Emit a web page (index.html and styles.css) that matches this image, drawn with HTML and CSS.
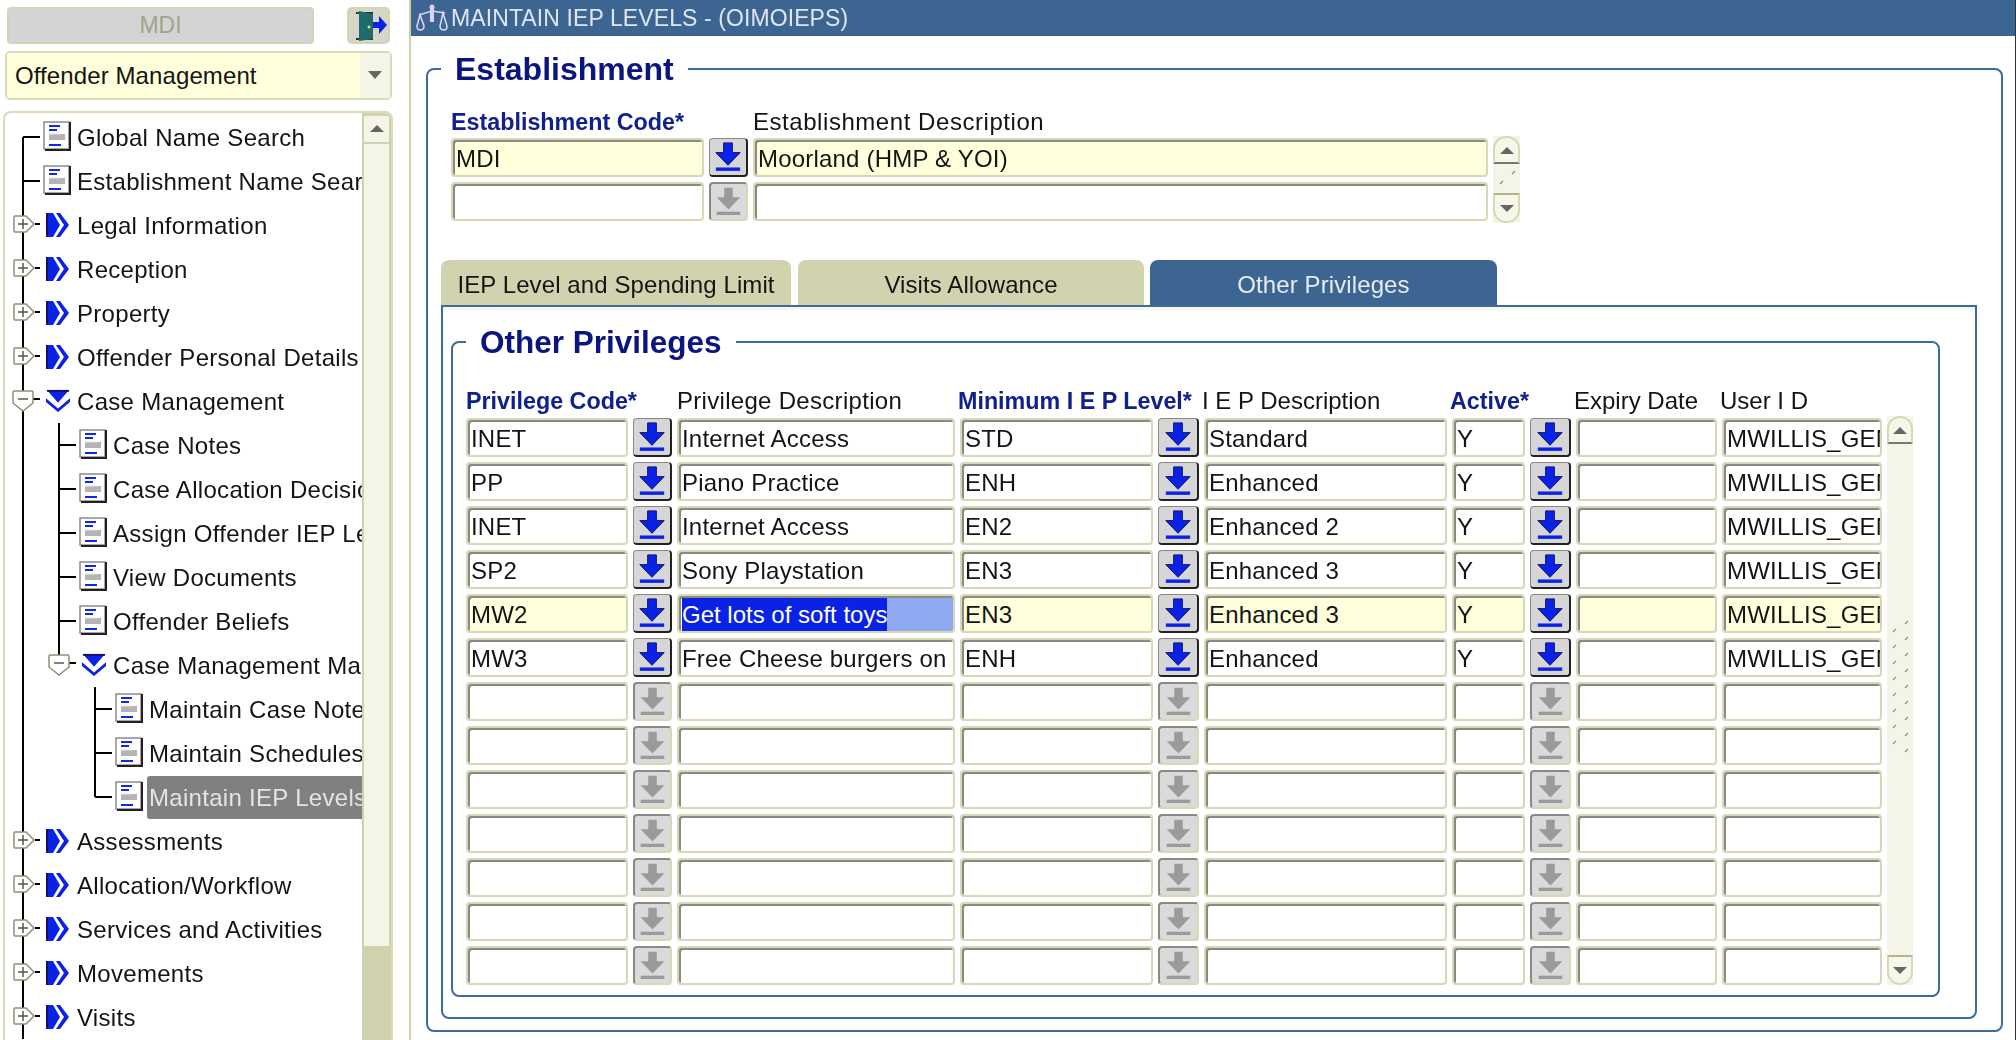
FILE: index.html
```html
<!DOCTYPE html>
<html>
<head>
    <title>Maintain IEP Levels</title>
    <link rel="stylesheet" href="styles.css">
</head>
<body>
    <svg class="defs">
        <symbol id="doc" viewBox="0 0 28 30">
            <rect x="1" y="1" width="25" height="27" fill="#fff" stroke="#8b8b8b" stroke-width="1.5"/>
            <path d="M27 1V29H2" fill="none" stroke="#222" stroke-width="2"/>
            <path d="M6 5H17M6 9H14M6 24H18" stroke="#1226e6" stroke-width="2"/>
            <rect x="6" y="13" width="16" height="6" fill="#b4b4b4"/>
            <path d="M6 13H18" stroke="#e4e4e4"/>
        </symbol>
        <symbol id="folder" viewBox="0 0 24 24">
            <path d="M0 0H7L14 12L7 24H0Z" fill="#0a22e8"/>
            <path d="M10 0H14L23 12L14 24H10L18 12Z" fill="#0a22e8"/>
            <path d="M0 0H2V24H0Z" fill="#10106a"/>
        </symbol>
        <symbol id="folder-open" viewBox="0 0 26 24">
            <path d="M1 0H25L13 14Z" fill="#0a22e8"/>
            <path d="M0 9L13 20L26 9V13L13 24L0 13Z" fill="#0a22e8"/>
            <path d="M1 0H25V2H1Z" fill="#10106a"/>
        </symbol>
        <symbol id="stub" viewBox="0 0 38 44">
            <path d="M18 22H35" stroke="#000" stroke-width="2"/>
        </symbol>
        <symbol id="plus" viewBox="0 0 38 44">
            <path d="M30 21H35" stroke="#000" stroke-width="2"/>
            <path d="M10 13H21L29 21L21 29H10Q9 29 9 28V14Q9 13 10 13Z" fill="#fff" stroke="#8f8f78" stroke-width="1.5"/>
            <path d="M13 21H23M18 16V26" stroke="#555" stroke-width="1.5"/>
        </symbol>
        <symbol id="minus" viewBox="0 0 38 44">
            <path d="M28 20H35" stroke="#000" stroke-width="2"/>
            <path d="M9 12H27Q28 12 28 13V24L18 32L8 24V13Q8 12 9 12Z" fill="#fff" stroke="#8f8f78" stroke-width="1.5"/>
            <path d="M13 20H23" stroke="#555" stroke-width="1.5"/>
        </symbol>
        <symbol id="lov" viewBox="1 1 37 37">
            <path d="M15 5H24V15H32L19.500 28L7 15H15Z" fill="#0a22e8" stroke="#10106a" stroke-width="1"/>
            <path d="M7 32H32" stroke="#0a22e8" stroke-width="3.500"/>
        </symbol>
        <symbol id="lov-off" viewBox="1 1 37 37">
            <path d="M15 5H24V15H32L19.500 28L7 15H15Z" fill="#9a9a9a"/>
            <path d="M7 32H32" stroke="#9a9a9a" stroke-width="3.500"/>
        </symbol>
    </svg>
    <svg class="pattern-defs" width="0" height="0">
        <pattern id="grip" width="26" height="16" patternUnits="userSpaceOnUse">
            <path d="M6 12L9 9M18 4L21 1" stroke="#8f8f78" stroke-width="1.2"/>
        </pattern>
    </svg>

    <aside class="sidebar">
        <div class="caseload">
            <div class="caseload-code">MDI</div>
            <button class="exit-btn">
                <svg width="34" height="32" viewBox="0 0 34 32">
                    <path d="M3 3H19V29H3" fill="none" stroke="#333" stroke-width="2"/>
                    <path d="M6 1L20 4V29L6 31Z" fill="#1d6b6b"/>
                    <circle cx="16" cy="17" r="1.500" fill="#e8e860"/>
                    <path d="M20 12H26V6L34 15L26 24V18H20Z" fill="#0a22e8"/>
                </svg>
            </button>
        </div>
        <div class="module-select">
            <span class="module-name">Offender Management</span>
            <span class="module-arrow"></span>
        </div>
        <div class="tree-panel">
            <div class="tree-clip">
                <ul class="tree">
                    <li><div class="node"><svg class="conn"><use href="#stub"/></svg><svg class="ico-doc"><use href="#doc"/></svg><span class="label">Global Name Search</span></div></li>
                    <li><div class="node"><svg class="conn"><use href="#stub"/></svg><svg class="ico-doc"><use href="#doc"/></svg><span class="label">Establishment Name Search</span></div></li>
                    <li><div class="node"><svg class="conn"><use href="#plus"/></svg><svg class="ico-folder"><use href="#folder"/></svg><span class="label">Legal Information</span></div></li>
                    <li><div class="node"><svg class="conn"><use href="#plus"/></svg><svg class="ico-folder"><use href="#folder"/></svg><span class="label">Reception</span></div></li>
                    <li><div class="node"><svg class="conn"><use href="#plus"/></svg><svg class="ico-folder"><use href="#folder"/></svg><span class="label">Property</span></div></li>
                    <li><div class="node"><svg class="conn"><use href="#plus"/></svg><svg class="ico-folder"><use href="#folder"/></svg><span class="label">Offender Personal Details</span></div></li>
                    <li>
                        <div class="node"><svg class="conn"><use href="#minus"/></svg><svg class="ico-folder"><use href="#folder-open"/></svg><span class="label">Case Management</span></div>
                        <ul class="sub">
                            <li><div class="node"><svg class="conn"><use href="#stub"/></svg><svg class="ico-doc"><use href="#doc"/></svg><span class="label">Case Notes</span></div></li>
                            <li><div class="node"><svg class="conn"><use href="#stub"/></svg><svg class="ico-doc"><use href="#doc"/></svg><span class="label">Case Allocation Decisions</span></div></li>
                            <li><div class="node"><svg class="conn"><use href="#stub"/></svg><svg class="ico-doc"><use href="#doc"/></svg><span class="label">Assign Offender IEP Level</span></div></li>
                            <li><div class="node"><svg class="conn"><use href="#stub"/></svg><svg class="ico-doc"><use href="#doc"/></svg><span class="label">View Documents</span></div></li>
                            <li><div class="node"><svg class="conn"><use href="#stub"/></svg><svg class="ico-doc"><use href="#doc"/></svg><span class="label">Offender Beliefs</span></div></li>
                            <li>
                                <div class="node"><svg class="conn"><use href="#minus"/></svg><svg class="ico-folder"><use href="#folder-open"/></svg><span class="label">Case Management Maintenance</span></div>
                                <ul class="sub">
                                    <li><div class="node"><svg class="conn"><use href="#stub"/></svg><svg class="ico-doc"><use href="#doc"/></svg><span class="label">Maintain Case Notes</span></div></li>
                                    <li><div class="node"><svg class="conn"><use href="#stub"/></svg><svg class="ico-doc"><use href="#doc"/></svg><span class="label">Maintain Schedules</span></div></li>
                                    <li><div class="node"><svg class="conn"><use href="#stub"/></svg><svg class="ico-doc"><use href="#doc"/></svg><span class="label current">Maintain IEP Levels</span></div></li>
                                </ul>
                            </li>
                        </ul>
                    </li>
                    <li><div class="node"><svg class="conn"><use href="#plus"/></svg><svg class="ico-folder"><use href="#folder"/></svg><span class="label">Assessments</span></div></li>
                    <li><div class="node"><svg class="conn"><use href="#plus"/></svg><svg class="ico-folder"><use href="#folder"/></svg><span class="label">Allocation/Workflow</span></div></li>
                    <li><div class="node"><svg class="conn"><use href="#plus"/></svg><svg class="ico-folder"><use href="#folder"/></svg><span class="label">Services and Activities</span></div></li>
                    <li><div class="node"><svg class="conn"><use href="#plus"/></svg><svg class="ico-folder"><use href="#folder"/></svg><span class="label">Movements</span></div></li>
                    <li><div class="node"><svg class="conn"><use href="#plus"/></svg><svg class="ico-folder"><use href="#folder"/></svg><span class="label">Visits</span></div></li>
                </ul>
            </div>
            <div class="tree-scroll">
                <div class="tree-thumb">
                    <div class="tree-up"><span class="tri-up"></span></div>
                </div>
            </div>
        </div>
    </aside>

    <main class="window">
        <div class="titlebar">
            <svg class="title-icon" width="34" height="28" viewBox="0 0 34 28">
                <g fill="none" stroke="#d9d4f4" stroke-width="1.600">
                    <path d="M4 11L17 7L30 9"/>
                    <path d="M5 11L2 22Q2 26 5 26Q9 26 9 22ZM28 9L25 22Q25 26 29 26Q32 26 32 22Z"/>
                </g>
                <path d="M15 4H19V18H15Z" fill="#d9d4f4"/>
                <circle cx="17" cy="3" r="2.500" fill="#d9d4f4"/>
            </svg>
            <span class="title-text">MAINTAIN IEP LEVELS - (OIMOIEPS)</span>
        </div>

        <fieldset class="block-outer">
            <legend>Establishment</legend>
            <div class="est-grid">
                <div class="head req span2">Establishment Code*</div>
                <div class="head span2 head-wide">Establishment Description</div>
                <div class="field cur">MDI</div>
                <div class="lov"><svg><use href="#lov"/></svg></div>
                <div class="field cur">Moorland (HMP &amp; YOI)</div>
                <div class="spin spin-est">
                    <div class="spin-up"><span class="tri-up"></span></div>
                    <div class="spin-track"><svg class="est-grip" width="26" height="24"><path d="M7 20L10 17M19 10L22 7" stroke="#8f8f78" stroke-width="1.200"/></svg></div>
                    <div class="spin-down"><span class="tri-down"></span></div>
                </div>
                <div class="field"></div>
                <div class="lov off"><svg><use href="#lov-off"/></svg></div>
                <div class="field"></div>
            </div>

            <div class="tabs">
                <div class="tab tab-first">IEP Level and Spending Limit</div>
                <div class="tab tab-second">Visits Allowance</div>
                <div class="tab tab-third active">Other Privileges</div>
            </div>
            <div class="tab-panel">
                <fieldset class="block-inner">
                    <legend>Other Privileges</legend>
                    <div class="priv-grid">
                        <div class="head req span2">Privilege Code*</div>
                        <div class="head head-desc">Privilege Description</div>
                        <div class="head req span2 head-min">Minimum I E P Level*</div>
                        <div class="head head-iep">I E P Description</div>
                        <div class="head req span2 head-active">Active*</div>
                        <div class="head head-left">Expiry Date</div>
                        <div class="head span2 head-left">User I D</div>
                        <div class="spin spin-priv">
                            <div class="spin-up"><span class="tri-up"></span></div>
                            <div class="spin-track"><svg class="priv-grip" width="26" height="134"><rect width="26" height="134" fill="url(#grip)"/></svg></div>
                            <div class="spin-down"><span class="tri-down"></span></div>
                        </div>

                        <div class="field">INET</div><div class="lov"><svg><use href="#lov"/></svg></div><div class="field">Internet Access</div><div class="field">STD</div><div class="lov"><svg><use href="#lov"/></svg></div><div class="field">Standard</div><div class="field">Y</div><div class="lov"><svg><use href="#lov"/></svg></div><div class="field"></div><div class="field">MWILLIS_GEN</div>
                        <div class="field">PP</div><div class="lov"><svg><use href="#lov"/></svg></div><div class="field">Piano Practice</div><div class="field">ENH</div><div class="lov"><svg><use href="#lov"/></svg></div><div class="field">Enhanced</div><div class="field">Y</div><div class="lov"><svg><use href="#lov"/></svg></div><div class="field"></div><div class="field">MWILLIS_GEN</div>
                        <div class="field">INET</div><div class="lov"><svg><use href="#lov"/></svg></div><div class="field">Internet Access</div><div class="field">EN2</div><div class="lov"><svg><use href="#lov"/></svg></div><div class="field">Enhanced 2</div><div class="field">Y</div><div class="lov"><svg><use href="#lov"/></svg></div><div class="field"></div><div class="field">MWILLIS_GEN</div>
                        <div class="field">SP2</div><div class="lov"><svg><use href="#lov"/></svg></div><div class="field">Sony Playstation</div><div class="field">EN3</div><div class="lov"><svg><use href="#lov"/></svg></div><div class="field">Enhanced 3</div><div class="field">Y</div><div class="lov"><svg><use href="#lov"/></svg></div><div class="field"></div><div class="field">MWILLIS_GEN</div>
                        <div class="field cur">MW2</div><div class="lov"><svg><use href="#lov"/></svg></div><div class="field selected"><span class="sel-fill"><span class="sel-text">Get lots of soft toys</span></span></div><div class="field cur">EN3</div><div class="lov"><svg><use href="#lov"/></svg></div><div class="field cur">Enhanced 3</div><div class="field cur">Y</div><div class="lov"><svg><use href="#lov"/></svg></div><div class="field cur"></div><div class="field cur">MWILLIS_GEN</div>
                        <div class="field">MW3</div><div class="lov"><svg><use href="#lov"/></svg></div><div class="field">Free Cheese burgers on</div><div class="field">ENH</div><div class="lov"><svg><use href="#lov"/></svg></div><div class="field">Enhanced</div><div class="field">Y</div><div class="lov"><svg><use href="#lov"/></svg></div><div class="field"></div><div class="field">MWILLIS_GEN</div>

                        <div class="field"></div><div class="lov off"><svg><use href="#lov-off"/></svg></div><div class="field"></div><div class="field"></div><div class="lov off"><svg><use href="#lov-off"/></svg></div><div class="field"></div><div class="field"></div><div class="lov off"><svg><use href="#lov-off"/></svg></div><div class="field"></div><div class="field"></div>
                        <div class="field"></div><div class="lov off"><svg><use href="#lov-off"/></svg></div><div class="field"></div><div class="field"></div><div class="lov off"><svg><use href="#lov-off"/></svg></div><div class="field"></div><div class="field"></div><div class="lov off"><svg><use href="#lov-off"/></svg></div><div class="field"></div><div class="field"></div>
                        <div class="field"></div><div class="lov off"><svg><use href="#lov-off"/></svg></div><div class="field"></div><div class="field"></div><div class="lov off"><svg><use href="#lov-off"/></svg></div><div class="field"></div><div class="field"></div><div class="lov off"><svg><use href="#lov-off"/></svg></div><div class="field"></div><div class="field"></div>
                        <div class="field"></div><div class="lov off"><svg><use href="#lov-off"/></svg></div><div class="field"></div><div class="field"></div><div class="lov off"><svg><use href="#lov-off"/></svg></div><div class="field"></div><div class="field"></div><div class="lov off"><svg><use href="#lov-off"/></svg></div><div class="field"></div><div class="field"></div>
                        <div class="field"></div><div class="lov off"><svg><use href="#lov-off"/></svg></div><div class="field"></div><div class="field"></div><div class="lov off"><svg><use href="#lov-off"/></svg></div><div class="field"></div><div class="field"></div><div class="lov off"><svg><use href="#lov-off"/></svg></div><div class="field"></div><div class="field"></div>
                        <div class="field"></div><div class="lov off"><svg><use href="#lov-off"/></svg></div><div class="field"></div><div class="field"></div><div class="lov off"><svg><use href="#lov-off"/></svg></div><div class="field"></div><div class="field"></div><div class="lov off"><svg><use href="#lov-off"/></svg></div><div class="field"></div><div class="field"></div>
                        <div class="field"></div><div class="lov off"><svg><use href="#lov-off"/></svg></div><div class="field"></div><div class="field"></div><div class="lov off"><svg><use href="#lov-off"/></svg></div><div class="field"></div><div class="field"></div><div class="lov off"><svg><use href="#lov-off"/></svg></div><div class="field"></div><div class="field"></div>
                    </div>
                </fieldset>
            </div>
        </fieldset>
    </main>
</body>
</html>
```

FILE: styles.css
```css
* {
    box-sizing: border-box;
}
body {
    margin: 0;
    width: 2016px;
    height: 1040px;
    display: flex;
    overflow: hidden;
    background: #fff;
    color: #141414;
    font-family: "Liberation Sans", Arial, sans-serif;
    font-size: 24px;
}
.defs,
.pattern-defs {
    display: block;
    width: 0;
    height: 0;
    flex: none;
}

/* left column */
.sidebar {
    width: 409px;
    height: 1040px;
    flex: none;
    display: flex;
    flex-direction: column;
    padding-top: 7px;
    filter: blur(0.4px);
}
.caseload {
    display: flex;
    margin-left: 7px;
}
.caseload-code {
    width: 307px;
    height: 37px;
    background: #d4d4d4;
    border: 2px solid #d3d5b0;
    border-radius: 4px;
    text-align: center;
    line-height: 33px;
    font-size: 23px;
    color: #a3a38c;
}
.exit-btn {
    width: 43px;
    height: 37px;
    margin-left: 33px;
    padding: 0;
    background: #d6d6c8;
    border: 2px solid #d3d5b0;
    border-radius: 5px;
}
.exit-btn svg {
    display: block;
    margin: 1px 0 0 4px;
}
.module-select {
    width: 387px;
    height: 49px;
    margin: 7px 0 0 5px;
    display: flex;
    background: #ffffdc;
    border: 2px solid #d8dab8;
    border-radius: 5px;
}
.module-name {
    flex: 1;
    padding-left: 8px;
    line-height: 45px;
    letter-spacing: 0.1px;
}
.module-arrow {
    width: 30px;
    background: #f4f5e6;
}
.module-arrow::after {
    content: "";
    display: block;
    width: 0;
    margin: 18px auto 0;
    border-left: 7px solid transparent;
    border-right: 7px solid transparent;
    border-top: 8px solid #666;
}
.tree-panel {
    flex: 1;
    min-height: 0;
    width: 390px;
    margin: 11px 0 0 3px;
    display: flex;
    border: 2px solid #d8dab8;
    border-bottom: none;
    border-radius: 8px 8px 0 0;
    overflow: hidden;
}
.tree-clip {
    flex: 1;
    min-width: 0;
    overflow: hidden;
    padding-top: 2px;
}
.tree-scroll {
    width: 29px;
    flex: none;
    background: #d0d2ae;
    padding: 3px 2px 0 2px;
}
.tree-thumb {
    height: 830px;
    background: #f4f5e6;
}
.tree-up {
    height: 28px;
    padding-top: 9px;
    background: #f4f5e6;
    border-bottom: 2px solid #d0d2ae;
    border-radius: 10px 10px 0 0;
}

/* tree */
.tree,
.sub {
    list-style: none;
    margin: 0;
    padding: 0;
}
.sub {
    padding-left: 36px;
}
.tree li {
    background: linear-gradient(#000, #000) 17px 0 / 2px 100% no-repeat;
}
.tree > li:first-child {
    background-position: 17px 22px;
}
.sub > li:last-child {
    background-size: 2px 22px;
}
.node {
    height: 44px;
    display: flex;
    align-items: center;
}
.conn {
    width: 38px;
    height: 44px;
    flex: none;
}
.ico-doc {
    width: 28px;
    height: 30px;
    flex: none;
    margin: -3px 6px 0 0;
}
.ico-folder {
    width: 24px;
    height: 24px;
    flex: none;
    margin: -1px 7px 0 3px;
}
.label {
    flex: 1;
    white-space: nowrap;
    line-height: 43px;
    letter-spacing: 0.3px;
}
.label.current {
    background: #808080;
    color: #e4e4e4;
    padding-left: 2px;
    margin-left: -2px;
    border-radius: 3px 0 0 3px;
}

/* right column */
.window {
    flex: 1;
    min-width: 0;
    border-left: 2px solid #cfd0a8;
    border-right: 1px solid #333;
    filter: blur(0.4px);
}
.titlebar {
    height: 36px;
    display: flex;
    align-items: center;
    background: #3d6592;
    color: #dfe6f2;
    font-size: 23px;
    letter-spacing: 0.1px;
}
.title-icon {
    margin-left: 4px;
}
.title-text {
    margin-left: 2px;
}
legend {
    color: #0b1580;
    font-size: 32px;
    font-weight: bold;
    line-height: 36px;
    padding: 0 14px;
}
.block-outer {
    margin: 15px 12px 0 15px;
    padding: 22px 24px 11px 13px;
    border: 2px solid #3d6ba0;
    border-radius: 8px;
    min-width: 0;
}
.head {
    white-space: nowrap;
    line-height: 24px;
}
.est-grid .head {
    line-height: 26px;
}
.head.req {
    color: #10208c;
    font-weight: bold;
    font-size: 23.300px;
}
.head-wide {
    letter-spacing: 0.55px;
}
.head-desc {
    letter-spacing: 0.3px;
}
.head-min,
.head-iep,
.head-active,
.head-left {
    margin-left: -2px;
}
.span2 {
    grid-column: span 2;
}
.est-grid {
    display: grid;
    grid-template-columns: 253px 39px 735px 27px;
    grid-template-rows: 24px;
    grid-auto-rows: 39px;
    gap: 5px;
    margin-left: 10px;
}
.field {
    height: 39px;
    padding-left: 3px;
    background: #fff;
    border: 2px solid #d6d8b6;
    border-radius: 4px;
    box-shadow: inset 2px 2px 0 #8a8a82;
    line-height: 38px;
    white-space: nowrap;
    overflow: hidden;
    letter-spacing: 0.2px;
}
.field.cur {
    background: #ffffdc;
}
.field.selected {
    padding: 2px 0 0 3px;
}
.sel-fill {
    display: block;
    height: 33px;
    line-height: 34px;
    background: #8fa9f0;
}
.sel-text {
    display: inline-block;
    height: 33px;
    background: #0a22e6;
    color: #fff;
    letter-spacing: 0;
}
.lov {
    height: 39px;
    background: #d6d6d6;
    border: 1px solid #8a8a82;
    border-right: 2px solid #222;
    border-bottom: 2px solid #222;
    border-radius: 4px;
}
.lov svg {
    display: block;
    width: 100%;
    height: 100%;
}
.lov.off {
    background: #dadada;
    border: 2px solid #d6d8b6;
    border-top-color: #8a8a82;
    border-left-color: #8a8a82;
}

/* little scroll bars */
.spin {
    display: flex;
    flex-direction: column;
    background: #f4f5e6;
}
.spin-est {
    grid-column: 4;
    grid-row: 2 / span 2;
    margin-top: -2px;
    margin-bottom: -2px;
}
.spin-priv {
    grid-column: 11;
    grid-row: 2 / span 13;
    margin-top: -2px;
}
.spin-up {
    height: 28px;
    padding-top: 9px;
    background: #f6f7ea;
    border: 2px solid #d6d8b6;
    border-bottom: 2px solid #777;
    border-radius: 13px 13px 0 0;
}
.spin-track {
    flex: 1;
    min-height: 0;
}
.spin-track svg {
    display: block;
}
.priv-grip {
    margin-top: 176px;
}
.spin-down {
    height: 30px;
    padding-top: 10px;
    background: #f6f7ea;
    border: 2px solid #d6d8b6;
    border-top: 2px solid #b3b38c;
    border-radius: 0 0 13px 13px;
}
.tri-up,
.tri-down {
    display: block;
    width: 0;
    margin: 0 auto;
    border-left: 7px solid transparent;
    border-right: 7px solid transparent;
}
.tri-up {
    border-bottom: 7px solid #666;
}
.tri-down {
    border-top: 7px solid #666;
}

/* tabs */
.tabs {
    display: flex;
    gap: 7px;
    margin-top: 39px;
}
.tab {
    height: 45px;
    background: #d1d3ae;
    border-radius: 8px 8px 0 0;
    text-align: center;
    line-height: 50px;
    letter-spacing: 0.1px;
}
.tab-first {
    width: 350px;
}
.tab-second {
    width: 346px;
}
.tab-third {
    width: 347px;
    margin-left: -1px;
}
.tab.active {
    background: #3d6592;
    color: #e6ecf6;
}
.tab-panel {
    height: 714px;
    padding: 17px 35px 0 8px;
    border: 2px solid #3d6ba0;
    border-radius: 0 0 8px 8px;
    box-shadow: inset 0 3px 0 #f6f7ea;
}
.block-inner {
    margin: 0;
    padding: 29px 0 0 13px;
    height: 673px;
    border: 2px solid #3d6ba0;
    border-radius: 8px;
    min-width: 0;
}
.block-inner > legend {
    font-size: 31.500px;
}
.priv-grid {
    display: grid;
    grid-template-columns: 162px 39px 278px 193px 41px 243px 73px 41px 141px 160px 26px;
    grid-template-rows: 24px;
    grid-auto-rows: 39px;
    gap: 5px;
}
```
